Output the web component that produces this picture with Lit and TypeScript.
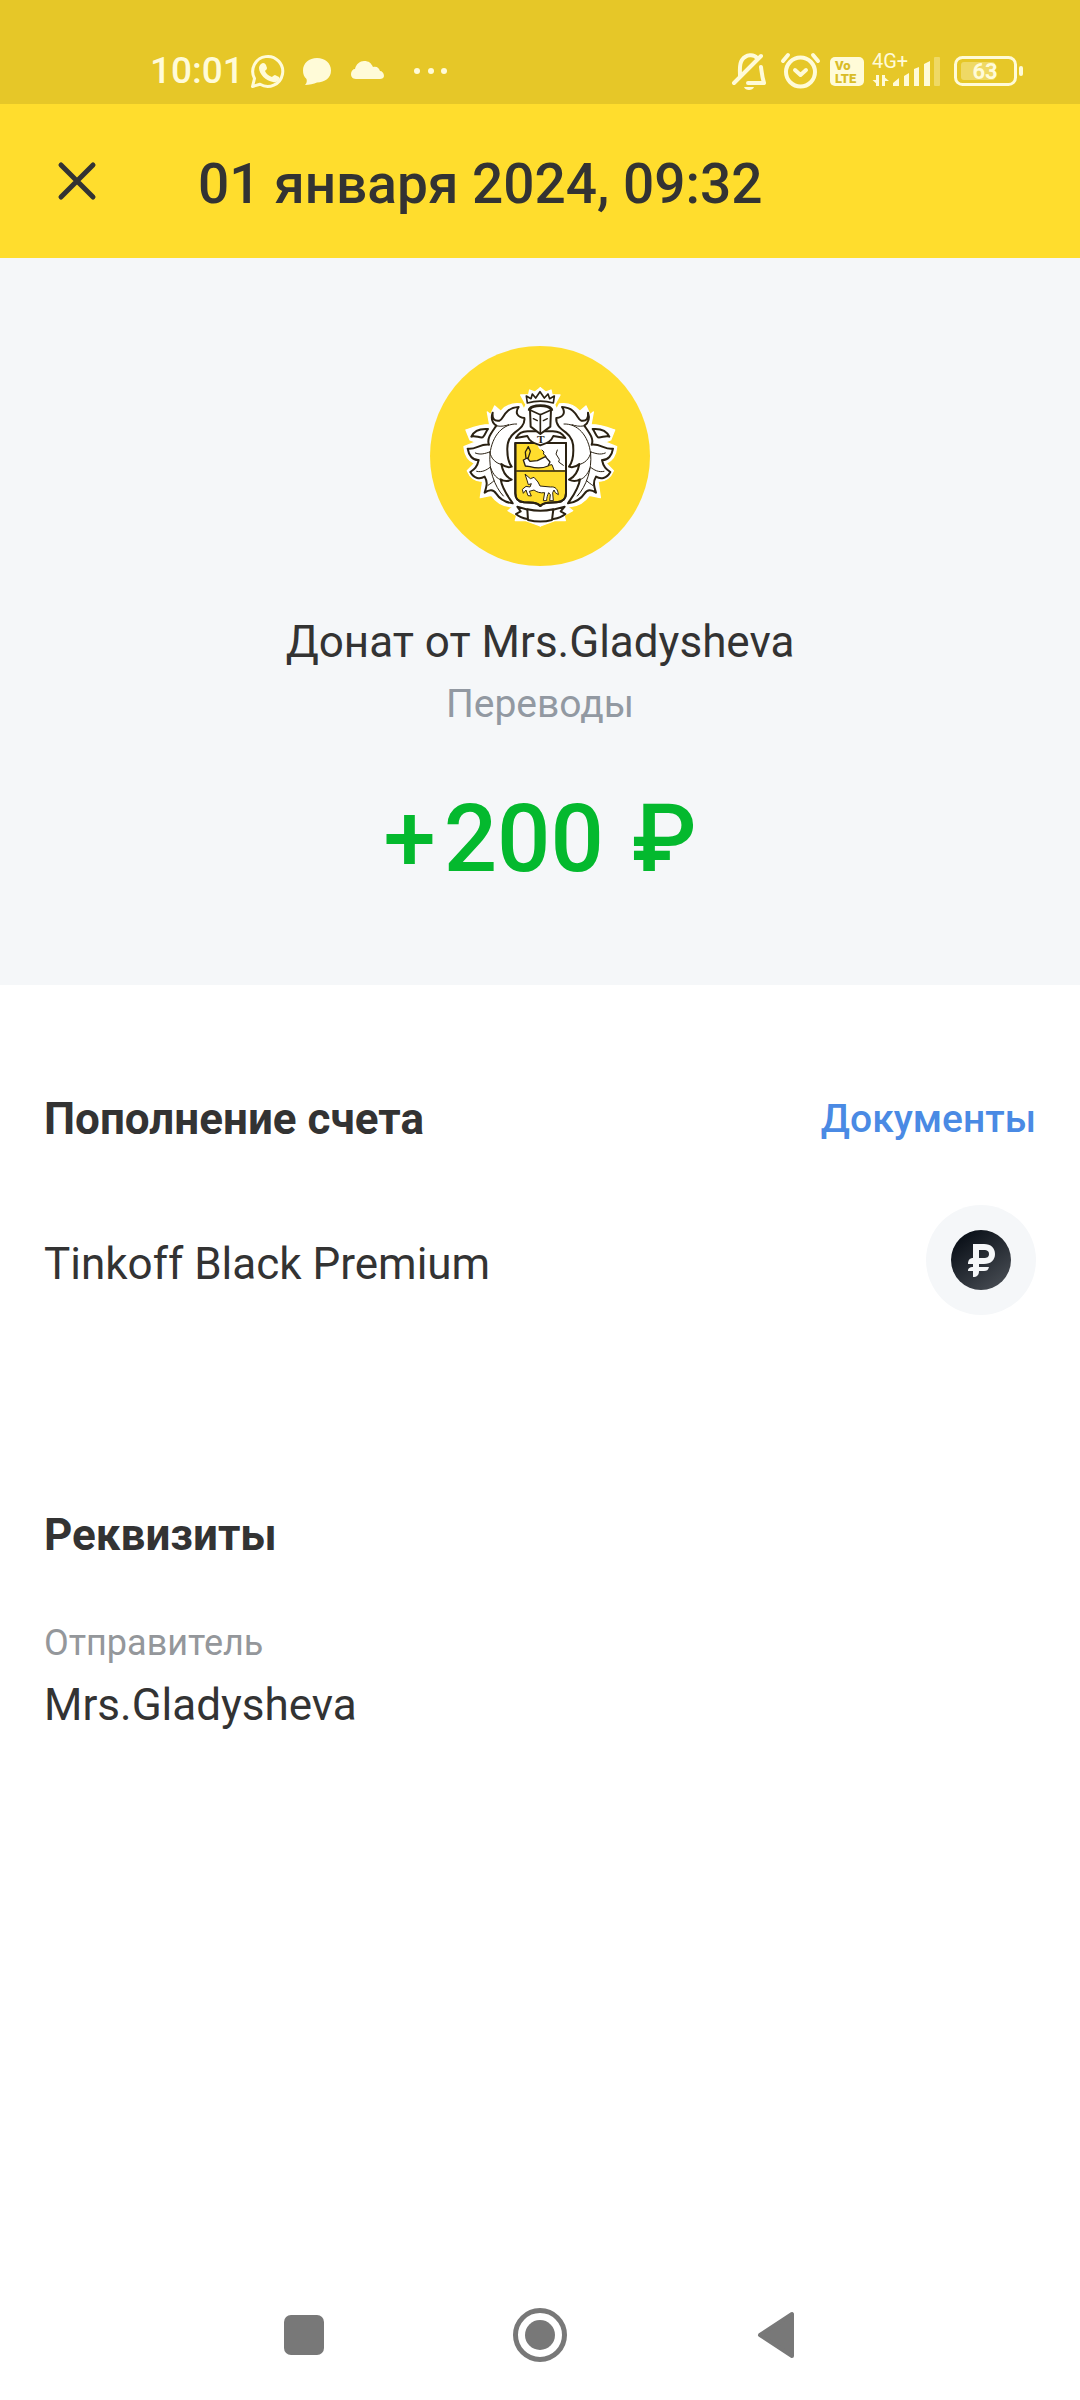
import { LitElement, html, css, svg } from "lit";
import { customElement, property } from "lit/decorators.js";

const plume = svg`
  <path d="M218 232C216 250 222 258 238 256C252 253 250 218 296 215C284 232 292 246 313 248C316 268 300 280 284 292C266 306 261 325 262 345C262 370 267 384 275 394C263 398 252 393 244 386C248 410 258 425 275 433C263 439 252 438 242 432C246 460 262 480 278 504C255 501 240 492 228 474C220 462 208 462 194 472C200 452 204 440 194 424C180 433 162 430 151 410C163 402 172 395 176 374C158 375 146 360 143 340C165 345 180 325 207 328C199 310 216 290 229 271C216 262 212 250 218 232Z" />
  <path d="M154 304C162 286 178 279 204 281C198 287 198 296 188 306C178 308 164 299 154 304Z" />
  <g fill="none" stroke-width="3">
    <path d="M290 266C250 264 216 300 210 356C206 400 222 452 250 482" />
    <path d="M232 272C244 274 256 272 266 268M166 353C182 360 196 354 209 350M170 408C186 412 200 404 210 396M209 350C214 372 228 384 246 388M212 398C220 420 232 430 244 434M204 450C210 446 216 442 222 436" />
  </g>
`;

const mantleHalo = svg`
  <path d="M361 157L345 170L329 164L326 178L302 179L318 208L312 222L304 206C280 202 258 210 242 228L224 212L212 238L202 230L209 268C180 268 160 276 138 284L150 314L166 320L132 334C134 358 144 376 164 384L142 406C150 426 162 438 188 438L181 487L214 480C228 500 246 512 272 514L286 510L264 526L290 540L286 556L318 556L361 572Z" />
`;

@customElement("bank-crest")
class BankCrest extends LitElement {
  static styles = css`
    :host {
      display: block;
      width: 220px;
      height: 220px;
    }

    svg {
      display: block;
      width: 100%;
      height: 100%;
    }

    .letter {
      font: 700 34px "Liberation Serif", serif;
    }
  `;

  render() {
    return html`
      <svg viewBox="30 32 660 660" role="img" aria-label="Тинькофф">
        <circle cx="360" cy="362" r="330" fill="#ffdd2d" />
        <g fill="#fff" stroke="#fff" stroke-width="4" stroke-linejoin="round">
          ${mantleHalo}
          <g transform="matrix(-1 0 0 1 722 0)">${mantleHalo}</g>
        </g>
        <g fill="#fff" stroke="#2a2112" stroke-width="6" stroke-linejoin="round" stroke-linecap="round">
          ${plume}
          <g transform="matrix(-1 0 0 1 722 0)">${plume}</g>

          <!-- ribbon -->
          <path d="M326 524L292 514L302 528L288 536C298 545 310 549 322 551M396 524L434 514L422 528L436 536C426 545 412 549 400 551" />
          <path d="M322 522C348 528 374 528 400 522L396 554C374 560 348 560 324 554Z" />

          <!-- shield -->
          <path d="M286 323H438V474C438 492 428 500 410 501L384 502C372 503 366 506 361 512C356 506 350 503 340 502L312 501C296 500 286 492 286 474Z" fill="#ffdd2d" />
          <path d="M350 326H435V404H402L396 388L384 390L388 376L376 364L370 348L358 340Z" stroke="none" />
          <path d="M366 344L372 350L370 356L378 362L376 372M386 376L384 390L396 388L402 404M412 344L408 356L418 372L416 380L430 390" fill="none" stroke-width="3" />
          <path d="M290 407H434" stroke-width="4" fill="none" />
          <path d="M318 370L316 350L325 334L331 348L324 370Z" stroke-width="4" fill="#ffdd2d" />
          <path d="M310 374L322 368L330 378L352 376L376 364L390 380L384 392C366 400 344 398 330 394L316 392Z" stroke-width="4" />
          <path d="M316 417L331 430L342 426L354 440L360 452L392 455C406 453 414 462 415 478L406 472L402 464L398 472L400 496H389L391 478L386 472C382 480 380 488 380 496H370L374 472C360 474 350 470 342 464L328 468L334 482L324 481L318 464L310 474L307 462L318 453L330 455L334 445L325 448L322 438Z" stroke-width="3" />
          <path d="M286 323H438V474C438 492 428 500 410 501L384 502C372 503 366 506 361 512C356 506 350 503 340 502L312 501C296 500 286 492 286 474Z" fill="none" />

          <!-- knight -->
          <path d="M288 308C296 292 312 286 330 288H392C412 286 426 292 436 308L400 302C392 322 376 324 361 330C346 324 330 322 322 302Z" />
          <path d="M330 222C340 209 382 209 393 222L391 274L361 296L332 274Z" />
          <path d="M330 224L361 238L393 224M361 238V292M326 224C328 204 394 204 397 224" fill="none" stroke-width="5" />
          <path d="M340 250L352 256M382 250L370 256" stroke-width="4" />
          <path d="M322 203L319 182L333 190L337 176L347 188L360 169L373 188L384 176L389 190L403 182L400 203C376 196 346 196 322 203Z" stroke-width="5" />
        </g>
        <text class="letter" x="362" y="324" text-anchor="middle" fill="#2a2112">T</text>
      </svg>
    `;
  }
}

@customElement("status-bar")
class StatusBar extends LitElement {
  static properties = {
    time: { type: String },
    battery: { type: Number },
  };

  static styles = css`
    :host {
      display: flex;
      justify-content: space-between;
      align-items: center;
      box-sizing: border-box;
      height: 104px;
      padding: 38px 54px 0 150px;
      background: #e6c728;
      color: #fffbd8;
    }

    .side {
      display: flex;
      align-items: center;
    }

    .time {
      font-size: 37px;
      font-weight: 500;
      line-height: 44px;
    }

    svg {
      display: block;
      fill: currentColor;
    }

    .left svg {
      width: 198px;
      height: 40px;
      margin-left: 5px;
    }

    .right svg {
      width: 296px;
      height: 44px;
    }

    .line {
      fill: none;
      stroke: currentColor;
      stroke-width: 4;
      stroke-linecap: round;
      stroke-linejoin: round;
    }

    .thin {
      stroke-width: 3;
    }

    .faded {
      opacity: 0.35;
    }

    .volte {
      font-size: 13px;
      font-weight: 900;
      fill: #d9bc26;
    }

    .network {
      font-size: 20px;
    }

    .charge {
      font-size: 22px;
      font-weight: 700;
    }
  `;

  declare time: string;
  declare battery: number;

  constructor() {
    super();
    this.time = "";
    this.battery = 0;
  }

  render() {
    return html`
      <div class="side left">
        <span class="time">${this.time}</span>
        <svg viewBox="250 50 198 40" aria-hidden="true">
          <path class="line thin" d="M253.500 85.500L255.500 77.500A15 15 0 1 1 261 83.300Z" />
          <path d="M262 63C264 61 266 62 267 64L268 67C268 69 266 69 266 70C267 73 270 75 273 76C274 75 275 74 276 74L280 76C281 79 278 82 274 81C267 80 260 73 260 67C260 65 261 64 262 63Z" />
          <path d="M318 57C326 57 332 62 332 69.500C332 77 326 81 318 81.500C315 83 310 84 306 84C308 82 308 80 307.500 78C305 76 304 73 304 69.500C304 62 310 57 318 57Z" />
          <path d="M357 78C353 78 352 75 352 73C352 70 354 68 356 68C357 63 361 60 365 60C370 60 372 62 374 66C378 65 380 67 381 70C383 70 385 72 385 75C385 77 383 78 381 78Z" />
          <circle cx="418" cy="70" r="3" />
          <circle cx="432" cy="70" r="3" />
          <circle cx="445" cy="70" r="3" />
        </svg>
      </div>
      <div class="side right">
        <svg viewBox="730 48 296 44" aria-label="Состояние телефона" role="img">
          <path class="line" d="M740 75C740 68 739 63 742 59C746 53 754 53 757 57M761 66C762 73 762 76 764 82H748M734 82L761 55" />
          <path d="M744 86H754C753 90 745 90 744 86Z" />
          <circle class="line" cx="800.500" cy="71" r="14.500" />
          <path class="line" d="M783 60L788 54M818 60L813 54M795 69L800.500 74L806 69" />
          <rect x="830" y="56" width="34" height="29" rx="5" />
          <text class="volte" x="835" y="69">Vo</text>
          <text class="volte" x="835" y="82">LTE</text>
          <text class="network" x="872" y="67">4G+</text>
          <path d="M876 74V85H879V74ZM872.500 79L879 85V79ZM882 85V74H885V85ZM882 74L889 80H882Z" />
          <path d="M893 82L899 77V85H893ZM904 75L909 72V85H904ZM914 68L919 66V85H914ZM924 63L930 60V85H924Z" />
          <rect class="faded" x="934" y="56" width="6" height="29" rx="1" />
          <rect class="line thin" x="955.500" y="56.500" width="60" height="27" rx="7" />
          <rect class="faded" x="961" y="61" width="34" height="18" rx="3" />
          <rect x="1019" y="65" width="4" height="10" rx="2" />
          <text class="charge" x="985" y="78" text-anchor="middle">${this.battery}</text>
        </svg>
      </div>
    `;
  }
}

@customElement("app-root")
class AppRoot extends LitElement {
  static styles = css`
    :host {
      display: flex;
      flex-direction: column;
      min-height: 100vh;
      background: #fff;
      color: #333;
      font-family: Roboto, sans-serif;
      font-size: 44px;
      line-height: 56px;
    }

    h1,
    h2,
    p,
    dl,
    dd {
      margin: 0;
      font-size: inherit;
    }

    button {
      display: grid;
      place-items: center;
      padding: 0;
      border: 0;
      background: none;
      color: inherit;
      font: inherit;
    }

    svg {
      display: block;
    }

    .toolbar {
      display: flex;
      align-items: center;
      gap: 74px;
      height: 154px;
      padding: 0 30px;
      background: #ffdd2d;
    }

    .close {
      width: 94px;
      height: 94px;
    }

    .toolbar h1 {
      padding-top: 6px;
      font-size: 55px;
      font-weight: 500;
      line-height: 64px;
    }

    .hero {
      display: flex;
      flex-direction: column;
      align-items: center;
      padding: 88px 44px 90px;
      background: #f5f7f9;
      text-align: center;
    }

    .hero h2 {
      margin-top: 48px;
      font-weight: 400;
    }

    .category {
      margin-top: 8px;
      color: #9299a2;
      font-size: 39px;
      line-height: 52px;
    }

    .amount {
      display: flex;
      margin-top: 53px;
      color: #04b92e;
      font-size: 94px;
      font-weight: 500;
      line-height: 112px;
    }

    .sign {
      margin-right: 8px;
    }

    .currency {
      margin-left: 28px;
    }

    .details {
      flex: 1;
      padding: 106px 44px 0;
    }

    .row {
      display: flex;
      align-items: center;
      justify-content: space-between;
    }

    .details h2 {
      font-weight: 700;
    }

    .documents {
      color: #4a8ae4;
      font-size: 39px;
      font-weight: 500;
      text-decoration: none;
    }

    .account {
      margin: 58px 0 192px;
    }

    .account p {
      padding-top: 8px;
    }

    .requisites {
      margin-top: 56px;
    }

    .requisites dt {
      color: #94979b;
      font-size: 36px;
      line-height: 48px;
    }

    .requisites dd {
      margin-top: 10px;
    }

    .nav {
      display: flex;
      align-items: center;
      justify-content: center;
      gap: 140px;
      height: 130px;
      color: #787878;
    }

    .nav button {
      width: 96px;
      height: 96px;
    }
  `;

  @property() title = "01 января 2024, 09:32";

  render() {
    return html`
      <status-bar time="10:01" battery="63"></status-bar>
      <header class="toolbar">
        <button class="close" aria-label="Закрыть">
          <svg width="40" height="40" viewBox="0 0 40 40" fill="none" stroke="currentColor" stroke-width="5" stroke-linecap="round">
            <path d="M4 4L36 36M36 4L4 36" />
          </svg>
        </button>
        <h1>${this.title}</h1>
      </header>

      <section class="hero">
        <bank-crest></bank-crest>
        <h2>Донат от Mrs.Gladysheva</h2>
        <p class="category">Переводы</p>
        <p class="amount">
          <span class="sign">+</span>
          <span>200</span>
          <span class="currency">₽</span>
        </p>
      </section>

      <main class="details">
        <div class="row">
          <h2>Пополнение счета</h2>
          <a class="documents" href="#documents">Документы</a>
        </div>
        <div class="row account">
          <p>Tinkoff Black Premium</p>
          <svg width="110" height="110" viewBox="0 0 110 110" role="img" aria-label="Рублёвый счёт">
            <defs>
              <linearGradient id="coin" x1="0.2" y1="0.1" x2="0.8" y2="0.9">
                <stop offset="0" stop-color="#0b1119" />
                <stop offset="1" stop-color="#43484f" />
              </linearGradient>
            </defs>
            <circle cx="55" cy="55" r="55" fill="#f5f7f9" />
            <circle cx="55" cy="55" r="30" fill="url(#coin)" />
            <path d="M47 39H58C65 39 69 43 69 49C69 55 65 59 58 59H53V62H63C62 65 61 66 58 66H53C53 70 51 72 47 72V66H42C42 63 44 62 47 62V59H42C42 55 44 53 47 53ZM53 45V53H58C61 53 63 52 63 49C63 46 61 45 58 45Z" fill="#f5f7f9" fill-rule="evenodd" />
          </svg>
        </div>

        <h2>Реквизиты</h2>
        <dl class="requisites">
          <dt>Отправитель</dt>
          <dd>Mrs.Gladysheva</dd>
        </dl>
      </main>

      <nav class="nav" aria-label="Системная навигация">
        <button aria-label="Недавние">
          <svg width="40" height="40" fill="currentColor"><rect width="40" height="40" rx="7" /></svg>
        </button>
        <button aria-label="Домой">
          <svg width="54" height="54" viewBox="0 0 54 54" fill="currentColor">
            <circle cx="27" cy="27" r="24.500" fill="none" stroke="currentColor" stroke-width="5" />
            <circle cx="27" cy="27" r="15" />
          </svg>
        </button>
        <button aria-label="Назад">
          <svg width="38" height="48" viewBox="0 0 38 48" fill="currentColor" stroke="currentColor" stroke-width="4" stroke-linejoin="round">
            <path d="M35 3V45L3 24Z" />
          </svg>
        </button>
      </nav>
    `;
  }
}
